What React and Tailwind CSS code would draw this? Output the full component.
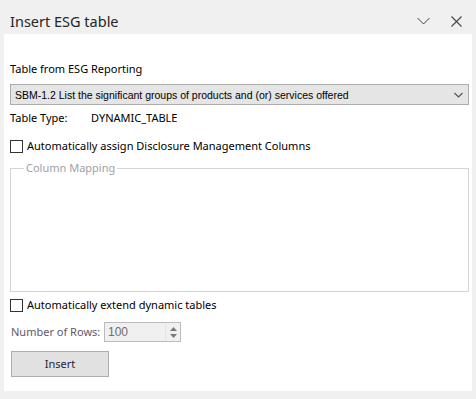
export default function App() {
  const ui = { fontFamily: '"Segoe UI", "Noto Sans", sans-serif' };
  const arial = { fontFamily: '"Liberation Sans", Arial, sans-serif' };

  return (
    <div className="w-[476px] h-[399px] bg-[#f0f0f0] flex flex-col text-[11px] text-black" style={ui}>
      {/* task pane header */}
      <div className="h-[34px] flex items-center pl-[10px] pr-[14px] pt-[8px]">
        <h1 className="flex-1 text-[14.5px] leading-[20px] text-[#262626]">Insert ESG table</h1>
        <button className="w-[14px] h-[14px] flex items-center justify-center mr-[20px]">
          <svg width="13" height="8" viewBox="0 0 13 8" fill="none" stroke="#444" strokeWidth="1">
            <path d="M0.5 1 L6.5 7 L12.5 1" />
          </svg>
        </button>
        <button className="w-[12px] h-[12px] flex items-center justify-center">
          <svg width="11" height="11" viewBox="0 0 11 11" fill="none" stroke="#444" strokeWidth="1.1">
            <path d="M0.5 0.5 L10.5 10.5 M10.5 0.5 L0.5 10.5" />
          </svg>
        </button>
      </div>

      <div className="flex-1 mx-[4px] mb-[8px] bg-white pl-[6px] pr-[3px] pt-[27px] flex flex-col">
        <label className="leading-[16px]">Table from ESG Reporting</label>

        <div className="mt-[7px] h-[21px] border border-[#acacac] bg-[#e5e5e5] flex items-center pl-[4px] pr-[5px]">
          <span className="flex-1 text-[10.5px] leading-[14px]" style={arial}>
            SBM-1.2 List the significant groups of products and (or) services offered
          </span>
          <svg width="9" height="6" viewBox="0 0 9 6" fill="none" stroke="#555" strokeWidth="1.2">
            <path d="M0.5 1 L4.5 5 L8.5 1" />
          </svg>
        </div>

        <div className="mt-[5px] flex leading-[16px]">
          <span className="w-[81px]">Table Type:</span>
          <span>DYNAMIC_TABLE</span>
        </div>

        <div className="mt-[12px] flex items-center gap-[4px] leading-[16px]">
          <span className="w-[13px] h-[13px] border border-[#333] bg-white" />
          <span>Automatically assign Disclosure Management Columns</span>
        </div>

        <fieldset className="mt-[6px] h-[132px] border border-[#d5d5d5] pl-[7px]">
          <legend className="px-[2px] ml-[6px] leading-[16px] text-[#a0a0a8]">Column Mapping</legend>
        </fieldset>

        <div className="mt-[5px] flex items-center gap-[4px] leading-[16px]">
          <span className="w-[13px] h-[13px] border border-[#333] bg-white" />
          <span>Automatically extend dynamic tables</span>
        </div>

        <div className="mt-[9px] flex items-center">
          <span className="pl-[1px] w-[94px] whitespace-nowrap text-[#5f5868] leading-[16px]">Number of Rows:</span>
          <div className="w-[77px] h-[20px] border border-[#bcbcbc] bg-[#f0f0f0] flex items-center">
            <span className="flex-1 pl-[3px] text-[12px] text-[#6d6d6d] leading-[14px]" style={arial}>100</span>
            <div className="w-[15px] h-full flex flex-col items-center justify-center gap-[3px] border-l border-[#e4e4e4]">
              <svg width="7" height="4" viewBox="0 0 7 4">
                <path d="M0 4 L3.5 0 L7 4 Z" fill="#7a7a7a" />
              </svg>
              <svg width="7" height="4" viewBox="0 0 7 4">
                <path d="M0 0 L3.5 4 L7 0 Z" fill="#7a7a7a" />
              </svg>
            </div>
          </div>
        </div>

        <button className="mt-[9px] ml-[1px] w-[98px] h-[26px] border border-[#adadad] bg-[#e1e1e1] text-[#1f1f3a] leading-[16px]">
          Insert
        </button>
      </div>
    </div>
  );
}
